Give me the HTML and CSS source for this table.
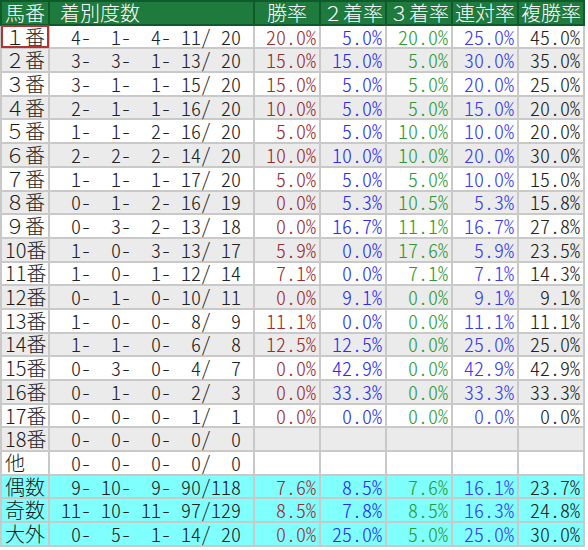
FILE: index.html
```html
<!DOCTYPE html>
<html lang="ja">
<head>
<meta charset="utf-8">
<link rel="stylesheet" href="styles.css">
</head>
<body>
<table class="stats">
<colgroup>
<col class="c-no"><col class="c-rec"><col class="c-p"><col class="c-p"><col class="c-p"><col class="c-p"><col class="c-p2">
</colgroup>
<thead>
<tr><th class="h-no">馬番</th><th class="h-rec">着別度数</th><th>勝率</th><th>２着率</th><th>３着率</th><th>連対率</th><th>複勝率</th></tr>
</thead>
<tbody>
<tr><td class="no sel">１番</td><td class="rec"><span class="f">4-</span><span class="f">1-</span><span class="f">4-</span><span class="f">11/</span><span class="g">20</span></td><td class="win">20.0%</td><td class="p2">5.0%</td><td class="p3">20.0%</td><td class="ren">25.0%</td><td class="fuku">45.0%</td></tr>
<tr class="alt"><td class="no">２番</td><td class="rec"><span class="f">3-</span><span class="f">3-</span><span class="f">1-</span><span class="f">13/</span><span class="g">20</span></td><td class="win">15.0%</td><td class="p2">15.0%</td><td class="p3">5.0%</td><td class="ren">30.0%</td><td class="fuku">35.0%</td></tr>
<tr><td class="no">３番</td><td class="rec"><span class="f">3-</span><span class="f">1-</span><span class="f">1-</span><span class="f">15/</span><span class="g">20</span></td><td class="win">15.0%</td><td class="p2">5.0%</td><td class="p3">5.0%</td><td class="ren">20.0%</td><td class="fuku">25.0%</td></tr>
<tr class="alt"><td class="no">４番</td><td class="rec"><span class="f">2-</span><span class="f">1-</span><span class="f">1-</span><span class="f">16/</span><span class="g">20</span></td><td class="win">10.0%</td><td class="p2">5.0%</td><td class="p3">5.0%</td><td class="ren">15.0%</td><td class="fuku">20.0%</td></tr>
<tr><td class="no">５番</td><td class="rec"><span class="f">1-</span><span class="f">1-</span><span class="f">2-</span><span class="f">16/</span><span class="g">20</span></td><td class="win">5.0%</td><td class="p2">5.0%</td><td class="p3">10.0%</td><td class="ren">10.0%</td><td class="fuku">20.0%</td></tr>
<tr class="alt"><td class="no">６番</td><td class="rec"><span class="f">2-</span><span class="f">2-</span><span class="f">2-</span><span class="f">14/</span><span class="g">20</span></td><td class="win">10.0%</td><td class="p2">10.0%</td><td class="p3">10.0%</td><td class="ren">20.0%</td><td class="fuku">30.0%</td></tr>
<tr><td class="no">７番</td><td class="rec"><span class="f">1-</span><span class="f">1-</span><span class="f">1-</span><span class="f">17/</span><span class="g">20</span></td><td class="win">5.0%</td><td class="p2">5.0%</td><td class="p3">5.0%</td><td class="ren">10.0%</td><td class="fuku">15.0%</td></tr>
<tr class="alt"><td class="no">８番</td><td class="rec"><span class="f">0-</span><span class="f">1-</span><span class="f">2-</span><span class="f">16/</span><span class="g">19</span></td><td class="win">0.0%</td><td class="p2">5.3%</td><td class="p3">10.5%</td><td class="ren">5.3%</td><td class="fuku">15.8%</td></tr>
<tr><td class="no">９番</td><td class="rec"><span class="f">0-</span><span class="f">3-</span><span class="f">2-</span><span class="f">13/</span><span class="g">18</span></td><td class="win">0.0%</td><td class="p2">16.7%</td><td class="p3">11.1%</td><td class="ren">16.7%</td><td class="fuku">27.8%</td></tr>
<tr class="alt"><td class="no">10番</td><td class="rec"><span class="f">1-</span><span class="f">0-</span><span class="f">3-</span><span class="f">13/</span><span class="g">17</span></td><td class="win">5.9%</td><td class="p2">0.0%</td><td class="p3">17.6%</td><td class="ren">5.9%</td><td class="fuku">23.5%</td></tr>
<tr><td class="no">11番</td><td class="rec"><span class="f">1-</span><span class="f">0-</span><span class="f">1-</span><span class="f">12/</span><span class="g">14</span></td><td class="win">7.1%</td><td class="p2">0.0%</td><td class="p3">7.1%</td><td class="ren">7.1%</td><td class="fuku">14.3%</td></tr>
<tr class="alt"><td class="no">12番</td><td class="rec"><span class="f">0-</span><span class="f">1-</span><span class="f">0-</span><span class="f">10/</span><span class="g">11</span></td><td class="win">0.0%</td><td class="p2">9.1%</td><td class="p3">0.0%</td><td class="ren">9.1%</td><td class="fuku">9.1%</td></tr>
<tr><td class="no">13番</td><td class="rec"><span class="f">1-</span><span class="f">0-</span><span class="f">0-</span><span class="f">8/</span><span class="g">9</span></td><td class="win">11.1%</td><td class="p2">0.0%</td><td class="p3">0.0%</td><td class="ren">11.1%</td><td class="fuku">11.1%</td></tr>
<tr class="alt"><td class="no">14番</td><td class="rec"><span class="f">1-</span><span class="f">1-</span><span class="f">0-</span><span class="f">6/</span><span class="g">8</span></td><td class="win">12.5%</td><td class="p2">12.5%</td><td class="p3">0.0%</td><td class="ren">25.0%</td><td class="fuku">25.0%</td></tr>
<tr><td class="no">15番</td><td class="rec"><span class="f">0-</span><span class="f">3-</span><span class="f">0-</span><span class="f">4/</span><span class="g">7</span></td><td class="win">0.0%</td><td class="p2">42.9%</td><td class="p3">0.0%</td><td class="ren">42.9%</td><td class="fuku">42.9%</td></tr>
<tr class="alt"><td class="no">16番</td><td class="rec"><span class="f">0-</span><span class="f">1-</span><span class="f">0-</span><span class="f">2/</span><span class="g">3</span></td><td class="win">0.0%</td><td class="p2">33.3%</td><td class="p3">0.0%</td><td class="ren">33.3%</td><td class="fuku">33.3%</td></tr>
<tr><td class="no">17番</td><td class="rec"><span class="f">0-</span><span class="f">0-</span><span class="f">0-</span><span class="f">1/</span><span class="g">1</span></td><td class="win">0.0%</td><td class="p2">0.0%</td><td class="p3">0.0%</td><td class="ren">0.0%</td><td class="fuku">0.0%</td></tr>
<tr class="alt"><td class="no">18番</td><td class="rec"><span class="f">0-</span><span class="f">0-</span><span class="f">0-</span><span class="f">0/</span><span class="g">0</span></td><td></td><td></td><td></td><td></td><td></td></tr>
<tr><td class="no">他</td><td class="rec"><span class="f">0-</span><span class="f">0-</span><span class="f">0-</span><span class="f">0/</span><span class="g">0</span></td><td></td><td></td><td></td><td></td><td></td></tr>
<tr class="sum"><td class="no">偶数</td><td class="rec"><span class="f">9-</span><span class="f">10-</span><span class="f">9-</span><span class="f">90/</span><span class="g">118</span></td><td class="win">7.6%</td><td class="p2">8.5%</td><td class="p3">7.6%</td><td class="ren">16.1%</td><td class="fuku">23.7%</td></tr>
<tr class="sum"><td class="no">奇数</td><td class="rec"><span class="f">11-</span><span class="f">10-</span><span class="f">11-</span><span class="f">97/</span><span class="g">129</span></td><td class="win">8.5%</td><td class="p2">7.8%</td><td class="p3">8.5%</td><td class="ren">16.3%</td><td class="fuku">24.8%</td></tr>
<tr class="sum"><td class="no">大外</td><td class="rec"><span class="f">0-</span><span class="f">5-</span><span class="f">1-</span><span class="f">14/</span><span class="g">20</span></td><td class="win">0.0%</td><td class="p2">25.0%</td><td class="p3">5.0%</td><td class="ren">25.0%</td><td class="fuku">30.0%</td></tr>
</tbody>
</table>
</body>
</html>
```
FILE: styles.css
```css
html, body {
  margin: 0;
  padding: 0;
  background: #ffffff;
}

body {
  font-family: "Noto Sans CJK JP", sans-serif;
  font-size: 20px;
  font-weight: 300;
  color: #222222;
}

.stats {
  border-collapse: collapse;
  table-layout: fixed;
  width: 584px;
}

.c-no { width: 48px; }
.c-rec { width: 205px; }
.c-p { width: 66px; }
.c-p2 { width: 66px; }

.stats tr {
  height: 23.7px;
}

.stats th,
.stats td {
  border: 2px solid #c9c9c9;
  padding: 0;
  line-height: 20px;
  white-space: nowrap;
}

.stats th {
  background: #1f7a3e;
  color: #ffffff;
  font-weight: 300;
  text-align: center;
  border-color: #0e5a2a;
}

.stats th.h-rec {
  text-align: left;
  padding-left: 10px;
}

.stats td {
  text-align: right;
  padding-right: 3px;
  font-feature-settings: "hwid" 1;
}

.stats td.no {
  text-align: left;
  padding-left: 3px;
  padding-right: 0;
  color: #1a1a1a;
  font-feature-settings: normal;
}

.stats td.sel {
  outline: 2px solid #b23535;
  outline-offset: -2px;
}

.stats td.rec {
  padding-right: 12px;
  color: #222222;
}

.rec .f {
  display: inline-block;
  width: 40px;
  text-align: right;
}

.rec .g {
  display: inline-block;
  width: 30px;
  text-align: right;
}

.win { color: #9c2c2c; }
.p2 { color: #2b2bf5; }
.p3 { color: #2e9a33; }
.ren { color: #3838f5; }
.fuku { color: #222222; }

.alt td { background: #ebebeb; }
.sum td { background: #80ffff; }
```
